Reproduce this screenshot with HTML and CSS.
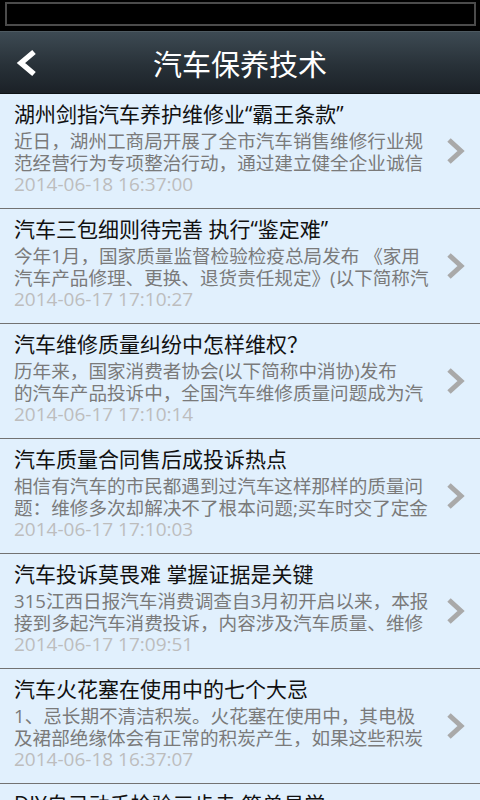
FILE: index.html
```html
<!DOCTYPE html>
<html lang="zh-CN">
<head>
<meta charset="utf-8">
<title>汽车保养技术</title>
<link rel="stylesheet" href="styles.css">
</head>
<body>
<div class="statusbar"><div class="frame"></div></div>
<header class="header">
  <svg class="back" width="24" height="28" viewBox="0 0 24 28"><path d="M19 3 L6 14 L19 25" fill="none" stroke="#fff" stroke-width="5.5" stroke-linejoin="miter"/></svg>
  <h1 class="title">汽车保养技术</h1>
</header>
<ul class="list">
  <li class="item">
    <div class="text">
      <div class="ttl">湖州剑指汽车养护维修业“霸王条款”</div>
      <div class="sum">近日，湖州工商局开展了全市汽车销售维修行业规<br>范经营行为专项整治行动，通过建立健全企业诚信</div>
      <div class="date">2014-06-18 16:37:00</div>
    </div>
    <svg class="chev" width="20" height="28" viewBox="0 0 20 28"><path d="M3 3 L15 14 L3 25" fill="none" stroke="#a9a9a9" stroke-width="5"/></svg>
  </li>
  <li class="item">
    <div class="text">
      <div class="ttl">汽车三包细则待完善 执行“鉴定难”</div>
      <div class="sum">今年1月，国家质量监督检验检疫总局发布 《家用<br>汽车产品修理、更换、退货责任规定》(以下简称汽</div>
      <div class="date">2014-06-17 17:10:27</div>
    </div>
    <svg class="chev" width="20" height="28" viewBox="0 0 20 28"><path d="M3 3 L15 14 L3 25" fill="none" stroke="#a9a9a9" stroke-width="5"/></svg>
  </li>
  <li class="item">
    <div class="text">
      <div class="ttl">汽车维修质量纠纷中怎样维权？</div>
      <div class="sum">历年来，国家消费者协会(以下简称中消协)发布<br>的汽车产品投诉中，全国汽车维修质量问题成为汽</div>
      <div class="date">2014-06-17 17:10:14</div>
    </div>
    <svg class="chev" width="20" height="28" viewBox="0 0 20 28"><path d="M3 3 L15 14 L3 25" fill="none" stroke="#a9a9a9" stroke-width="5"/></svg>
  </li>
  <li class="item">
    <div class="text">
      <div class="ttl">汽车质量合同售后成投诉热点</div>
      <div class="sum">相信有汽车的市民都遇到过汽车这样那样的质量问<br>题：维修多次却解决不了根本问题;买车时交了定金</div>
      <div class="date">2014-06-17 17:10:03</div>
    </div>
    <svg class="chev" width="20" height="28" viewBox="0 0 20 28"><path d="M3 3 L15 14 L3 25" fill="none" stroke="#a9a9a9" stroke-width="5"/></svg>
  </li>
  <li class="item">
    <div class="text">
      <div class="ttl">汽车投诉莫畏难 掌握证据是关键</div>
      <div class="sum">315江西日报汽车消费调查自3月初开启以来，本报<br>接到多起汽车消费投诉，内容涉及汽车质量、维修</div>
      <div class="date">2014-06-17 17:09:51</div>
    </div>
    <svg class="chev" width="20" height="28" viewBox="0 0 20 28"><path d="M3 3 L15 14 L3 25" fill="none" stroke="#a9a9a9" stroke-width="5"/></svg>
  </li>
  <li class="item">
    <div class="text">
      <div class="ttl">汽车火花塞在使用中的七个大忌</div>
      <div class="sum">1、忌长期不清洁积炭。火花塞在使用中，其电极<br>及裙部绝缘体会有正常的积炭产生，如果这些积炭</div>
      <div class="date">2014-06-18 16:37:07</div>
    </div>
    <svg class="chev" width="20" height="28" viewBox="0 0 20 28"><path d="M3 3 L15 14 L3 25" fill="none" stroke="#a9a9a9" stroke-width="5"/></svg>
  </li>
  <li class="item">
    <div class="text">
      <div class="ttl">DIY自己动手检验三步走 简单易学</div>
      <div class="sum">想要了解自己的爱车状况，其实并不需要每次都去<br>维修店，只要掌握简单的方法就可以自己动手检验</div>
      <div class="date">2014-06-16 10:21:45</div>
    </div>
    <svg class="chev" width="20" height="28" viewBox="0 0 20 28"><path d="M3 3 L15 14 L3 25" fill="none" stroke="#a9a9a9" stroke-width="5"/></svg>
  </li>
</ul>
</body>
</html>
```
FILE: styles.css
```css
* { box-sizing: border-box; }
html, body {
  margin: 0;
  padding: 0;
  width: 480px;
  height: 800px;
  overflow: hidden;
  background: #e1f0fd;
  font-family: "Open Sans", "Noto Sans CJK SC", sans-serif;
}
.statusbar {
  height: 31px;
  background: #000;
  padding: 2px 4px 5px 5px;
}
.frame {
  height: 24px;
  border: 2px solid #4b4b4b;
}
.header {
  height: 63px;
  display: flex;
  align-items: center;
  justify-content: center;
  position: relative;
  background: linear-gradient(#3d4a53, #283138 55%, #1b2127);
  border-top: 1px solid #4e5a61;
  border-bottom: 1px solid #0e1215;
}
.back {
  position: absolute;
  left: 15px;
  top: 17px;
}
.title {
  margin: 0;
  color: #fff;
  font-weight: normal;
  font-size: 29px;
  line-height: 36px;
  font-family: "Noto Sans CJK SC", sans-serif;
}
.list {
  list-style: none;
  margin: 0;
  padding: 0;
}
.item {
  height: 115px;
  display: flex;
  align-items: center;
  border-bottom: 1px solid #727272;
  padding-left: 14px;
  overflow: hidden;
}
.text {
  width: 420px;
  align-self: flex-start;
  padding-top: 6px;
}
.ttl {
  font-size: 21px;
  line-height: 29px;
  color: #111;
  white-space: nowrap;
}
.sum {
  font-size: 18.6px;
  line-height: 22px;
  color: #7a7a7a;
  white-space: nowrap;
  margin-top: 1px;
}
.date {
  font-size: 19px;
  line-height: 20px;
  color: #bdbdbd;
}
.chev {
  margin-left: 12px;
}
```
